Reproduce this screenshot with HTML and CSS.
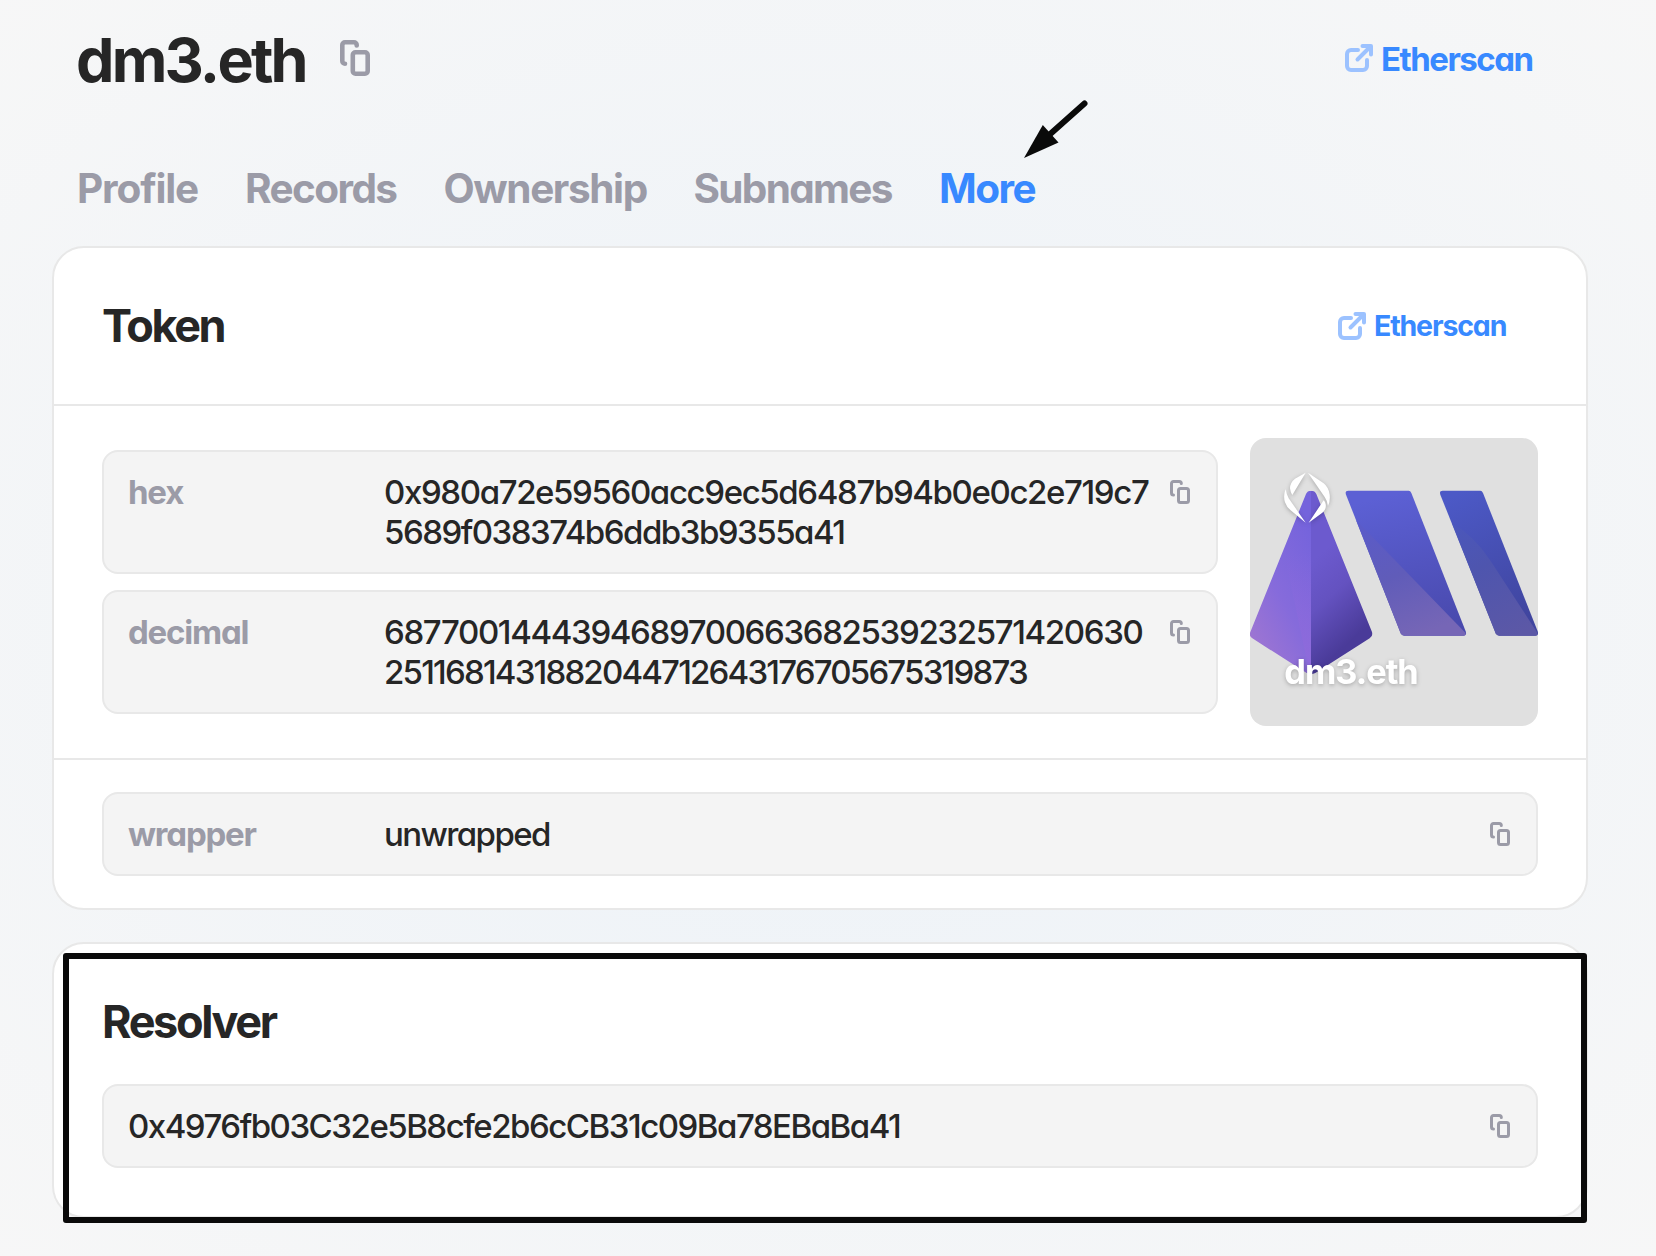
FILE: index.html
```html
<!DOCTYPE html>
<html lang="en">
<head>
<meta charset="utf-8">
<title>dm3.eth</title>
<link rel="stylesheet" href="styles.css">
</head>
<body>
<svg class="defs" width="0" height="0">
  <symbol id="copy" viewBox="0 0 20 24">
    <path d="M11.300 3.500a2 2 0 0 0-2-2H3.500a2 2 0 0 0-2 2v9.500a2 2 0 0 0 2 2M10.500 8.500h6a2 2 0 0 1 2 2v10a2 2 0 0 1-2 2h-6a2 2 0 0 1-2-2v-10a2 2 0 0 1 2-2z"/>
  </symbol>
  <symbol id="out" viewBox="0 0 28 28">
    <path d="M13 6H6a4 4 0 0 0-4 4v12a4 4 0 0 0 4 4h12a4 4 0 0 0 4-4v-6M17.500 2H26v8.500M25 3 12.500 15.500"/>
  </symbol>
</svg>
<main class="page">
  <header class="head">
    <h1 class="name">dm3.eth</h1>
    <svg class="copy copy-lg" viewBox="0 0 30 36"><path d="M16.700 5.500V5a2.700 2.700 0 0 0-2.700-2.700H5A2.700 2.700 0 0 0 2.300 5v16a2.700 2.700 0 0 0 2.700 2.700M15.500 12.300h9.500a2.700 2.700 0 0 1 2.700 2.700v16a2.700 2.700 0 0 1-2.700 2.700h-9.500a2.700 2.700 0 0 1-2.700-2.700V15a2.700 2.700 0 0 1 2.700-2.700z"/></svg>
    <a class="link link-lg"><svg class="out"><use href="#out"/></svg><span class="link-lg-text">Etherscan</span></a>
  </header>
  <nav class="tabs">
    <a class="tab profile">Profile</a>
    <a class="tab records">Records</a>
    <a class="tab ownership">Ownership</a>
    <a class="tab subnames">Subnames</a>
    <a class="tab active">More</a>
  </nav>
  <section class="card">
    <div class="card-head">
      <h2 class="title">Token</h2>
      <a class="link"><svg class="out"><use href="#out"/></svg><span class="link-text">Etherscan</span></a>
    </div>
    <div class="token">
      <div class="rows">
        <div class="row">
          <span class="label">hex</span>
          <span class="value hex">0x980a72e59560acc9ec5d6487b94b0e0c2e719c7<br><span class="hex-end">5689f038374b6ddb3b9355a41</span></span>
          <svg class="copy"><use href="#copy"/></svg>
        </div>
        <div class="row">
          <span class="label">decimal</span>
          <span class="value decimal">6877001444394689700663682539232571420630<br><span class="decimal-end">2511681431882044712643176705675319873</span></span>
          <svg class="copy"><use href="#copy"/></svg>
        </div>
      </div>
      <svg class="avatar" viewBox="60 54 864 864">
        <defs>
          <linearGradient id="left" x1=".7" y1="0" x2=".1" y2="1"><stop offset="0" stop-color="#7463dc"/><stop offset=".5" stop-color="#866bdb"/><stop offset="1" stop-color="#a679cf"/></linearGradient>
          <linearGradient id="leftLow" gradientUnits="userSpaceOnUse" x1="200" y1="400" x2="243" y2="700"><stop offset="0" stop-color="#8a68de" stop-opacity="0"/><stop offset="1" stop-color="#8f6adb" stop-opacity=".8"/></linearGradient>
          <linearGradient id="right" gradientUnits="userSpaceOnUse" x1="240" y1="430" x2="410" y2="620"><stop offset="0" stop-color="#6c5ace"/><stop offset=".45" stop-color="#6452c0"/><stop offset="1" stop-color="#4a3b99"/></linearGradient>
          <linearGradient id="bar1" gradientUnits="userSpaceOnUse" x1="540" y1="212" x2="640" y2="647"><stop offset="0" stop-color="#5c60d4"/><stop offset="1" stop-color="#4848ab"/></linearGradient>
          <linearGradient id="bar1Low" gradientUnits="userSpaceOnUse" x1="430" y1="290" x2="560" y2="647"><stop offset="0" stop-color="#5a5bca"/><stop offset=".5" stop-color="#605cb9"/><stop offset="1" stop-color="#7666b6"/></linearGradient>
          <linearGradient id="bar2" gradientUnits="userSpaceOnUse" x1="700" y1="212" x2="880" y2="600"><stop offset="0" stop-color="#4c59c6"/><stop offset="1" stop-color="#40459f"/></linearGradient>
          <linearGradient id="bar2Low" gradientUnits="userSpaceOnUse" x1="690" y1="300" x2="860" y2="647"><stop offset="0" stop-color="#4b57bc"/><stop offset=".4" stop-color="#4e55ae"/><stop offset="1" stop-color="#5c58a6"/></linearGradient>
          <clipPath id="prism"><path d="M228 222Q232 212 243 212Q255 212 259 222L426 636Q430 648 419 655L256 759Q243 766 230 759L67 655Q56 648 61 636Z"/></clipPath>
        </defs>
        <g clip-path="url(#prism)">
          <path fill="url(#left)" d="M50 200H243V780H50z"/>
          <path fill="url(#leftLow)" d="M120 200H243V780z"/>
          <path fill="url(#right)" d="M243 200H440V780H243z"/>
        </g>
        <path fill="url(#bar1)" d="M355 212H536Q541 212 544 219L707 634Q711 647 700 647H523Q515 647 512 640L348 224Q344 212 355 212z"/>
        <path fill="url(#bar1Low)" d="M378 300L706 638Q709 647 700 647H523Q515 647 512 640z"/>
        <path fill="url(#bar2)" d="M638 212H751Q756 212 759 219L923 634Q927 647 916 647H808Q800 647 797 640L631 224Q627 212 638 212z"/>
        <path fill="url(#bar2Low)" d="M666 310Q730 345 780 420L922 638Q925 647 916 647H808Q800 647 797 640z"/>
        <g class="raised">
          <path d="M227 158L195 176Q180 188 180 205Q181 216 187 225zM167 208Q159 228 165 247Q170 262 182 271L227 308L176 235Q169 222 167 208zM234 158L281 190Q296 202 299 224Q301 245 294 258Q292 242 284 231zM236 308L275 280Q290 268 287 253Q286 246 281 241z"/>
          <text class="avatar-name" x="163" y="792">dm3.eth</text>
        </g>
      </svg>
    </div>
    <div class="wrap">
      <div class="row">
        <span class="label">wrapper</span>
        <span class="value">unwrapped</span>
        <svg class="copy"><use href="#copy"/></svg>
      </div>
    </div>
  </section>
  <section class="card resolver">
    <h2 class="title">Resolver</h2>
    <div class="row">
      <span class="value address">0x4976fb03C32e5B8cfe2b6cCB31c09Ba78EBaBa41</span>
      <svg class="copy"><use href="#copy"/></svg>
    </div>
    <div class="frame"></div>
  </section>
</main>
<svg class="arrow" viewBox="0 0 70 64"><path d="M64.500 7.500L28 40" stroke="#0a0a0a" stroke-width="6" stroke-linecap="round"/><path fill="#0a0a0a" d="M4 62L22.800 29L38.500 46.500z"/></svg>
</body>
</html>
```
FILE: styles.css
```css
* { box-sizing: border-box; margin: 0; }
.defs { position: absolute; }
body { height: 1256px; overflow: hidden; font-family: Inter, sans-serif; font-feature-settings: "cv11"; color: #262626;
  background: radial-gradient(72% 72% at 50% 50%, #ecf2f8, #f7f7f7) #f7f7f7; }
.page { width: 1536px; margin-left: 52px; }
.head { display: flex; height: 120px; padding: 20px 57px 20px 24px; align-items: center; }
.name { width: 228px; white-space: nowrap; font-size: 61px; line-height: 80px; font-weight: 650; letter-spacing: -2.8px; }
.copy { width: 20px; height: 24px; margin-top: 8px; fill: none; stroke: #9b9ba7; stroke-width: 3; stroke-linecap: round; flex: none; }
.copy-lg { width: 30px; height: 36px; margin: 0 0 4px 36px; stroke-width: 4.6; }
.link { margin-left: auto; display: flex; align-items: center; gap: 8px; color: #3889ff; font-weight: 650; font-size: 28.5px; letter-spacing: -1.15px; }
.link-text { width: 132px; padding-bottom: 1px; }
.link-lg { font-size: 33px; letter-spacing: -1.5px; margin-bottom: 4px; }
.link-lg-text { width: 150px; padding-top: 2px; }
.out { width: 28px; height: 28px; fill: none; stroke: #9cc2ff; stroke-width: 4; stroke-linecap: round; stroke-linejoin: round; }
.tabs { display: flex; padding: 45px 25px; height: 126px; font-size: 40.5px; font-weight: 650; line-height: 48px; color: #9b9ba7; }
.profile { width: 168px; letter-spacing: -1.15px; }
.records { width: 198.5px; letter-spacing: -1.6px; }
.ownership { width: 250px; letter-spacing: -1.4px; }
.subnames { width: 245.5px; letter-spacing: -1.7px; }
.active { color: #3889ff; letter-spacing: -1.5px; }
.card { background: #fff; border: 2px solid #e8e8e8; border-radius: 32px; }
.card-head { display: flex; align-items: center; height: 156px; padding: 0 80px 0 48px; }
.title { font-size: 45px; line-height: 56px; font-weight: 650; letter-spacing: -2.35px; }
.token { display: flex; height: 356px; border-top: 2px solid #e8e8e8; border-bottom: 2px solid #e8e8e8; padding: 32px 48px; align-items: center; gap: 32px; }
.rows { flex: 1; display: grid; gap: 16px; }
.row { display: flex; align-items: flex-start; background: #f4f4f4; border: 2px solid #e8e8e8; border-radius: 16px; padding: 20px 26px 20px 24px; font-size: 33px; line-height: 40px; font-weight: 500; }
.label { width: 256px; font-weight: 650; letter-spacing: -1.2px; color: #9b9ba7; }
.value { flex: 1; white-space: nowrap; letter-spacing: -1.6px; }
.hex { letter-spacing: -1.38px; }
.hex-end { letter-spacing: -1.5px; }
.decimal { letter-spacing: -1.36px; }
.decimal-end { letter-spacing: -1.35px; }
.address { letter-spacing: -1.49px; }
.decimal-end { letter-spacing: -1.8px; }
.avatar { width: 288px; height: 288px; flex: none; border-radius: 16px; background: #e0e0e0; }
.raised { fill: #fff; filter: drop-shadow(0 4px 6px rgba(0, 0, 0, .25)); }
.avatar-name { font-size: 103px; font-weight: 700; letter-spacing: -3px; }
.wrap { padding: 32px 48px; }
.resolver { position: relative; margin-top: 32px; height: 276px; padding: 50px 48px; }
.resolver .row { margin-top: 34px; }
.frame { position: absolute; left: 9px; top: 9px; width: 1524px; height: 270px; border: 6px solid #0a0a0a; border-radius: 3px; }
.arrow { position: absolute; left: 1020px; top: 96px; width: 70px; height: 64px; }
```
